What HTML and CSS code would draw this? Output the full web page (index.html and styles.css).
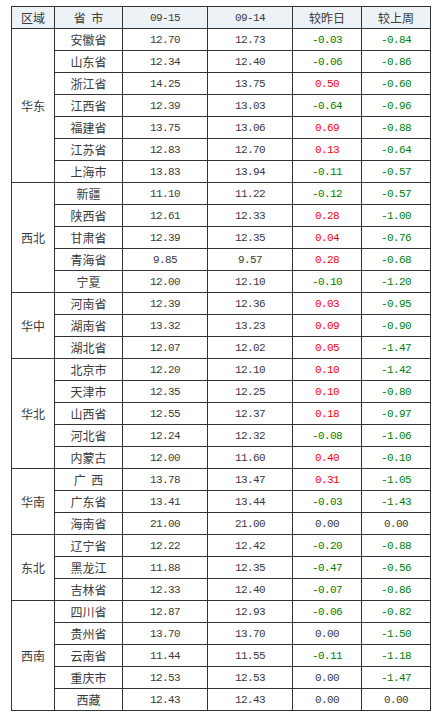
FILE: index.html
```html
<!DOCTYPE html>
<html lang="zh-CN">
<head>
<meta charset="utf-8">
<title>价格表</title>
<link rel="stylesheet" href="styles.css">
</head>
<body>
<div class="wrap">
<table class="price">
<colgroup>
<col class="c-region"><col class="c-prov"><col class="c-num"><col class="c-num"><col class="c-chg"><col class="c-chg">
</colgroup>
<thead>
<tr><th>区域</th><th>省&nbsp;&nbsp;市</th><th class="n">09-15</th><th class="n">09-14</th><th>较昨日</th><th>较上周</th></tr>
</thead>
<tbody>
<tr><td class="region" rowspan="7">华东</td><td>安徽省</td><td class="n">12.70</td><td class="n">12.73</td><td class="n dn">-0.03</td><td class="n dn">-0.84</td></tr>
<tr><td>山东省</td><td class="n">12.34</td><td class="n">12.40</td><td class="n dn">-0.06</td><td class="n dn">-0.86</td></tr>
<tr><td>浙江省</td><td class="n">14.25</td><td class="n">13.75</td><td class="n up">0.50</td><td class="n dn">-0.60</td></tr>
<tr><td>江西省</td><td class="n">12.39</td><td class="n">13.03</td><td class="n dn">-0.64</td><td class="n dn">-0.96</td></tr>
<tr><td>福建省</td><td class="n">13.75</td><td class="n">13.06</td><td class="n up">0.69</td><td class="n dn">-0.88</td></tr>
<tr><td>江苏省</td><td class="n">12.83</td><td class="n">12.70</td><td class="n up">0.13</td><td class="n dn">-0.64</td></tr>
<tr><td>上海市</td><td class="n">13.83</td><td class="n">13.94</td><td class="n dn">-0.11</td><td class="n dn">-0.57</td></tr>

<tr><td class="region" rowspan="5">西北</td><td>新疆</td><td class="n">11.10</td><td class="n">11.22</td><td class="n dn">-0.12</td><td class="n dn">-0.57</td></tr>
<tr><td>陕西省</td><td class="n">12.61</td><td class="n">12.33</td><td class="n up">0.28</td><td class="n dn">-1.00</td></tr>
<tr><td>甘肃省</td><td class="n">12.39</td><td class="n">12.35</td><td class="n up">0.04</td><td class="n dn">-0.76</td></tr>
<tr><td>青海省</td><td class="n">9.85</td><td class="n">9.57</td><td class="n up">0.28</td><td class="n dn">-0.68</td></tr>
<tr><td>宁夏</td><td class="n">12.00</td><td class="n">12.10</td><td class="n dn">-0.10</td><td class="n dn">-1.20</td></tr>

<tr><td class="region" rowspan="3">华中</td><td>河南省</td><td class="n">12.39</td><td class="n">12.36</td><td class="n up">0.03</td><td class="n dn">-0.95</td></tr>
<tr><td>湖南省</td><td class="n">13.32</td><td class="n">13.23</td><td class="n up">0.09</td><td class="n dn">-0.90</td></tr>
<tr><td>湖北省</td><td class="n">12.07</td><td class="n">12.02</td><td class="n up">0.05</td><td class="n dn">-1.47</td></tr>

<tr><td class="region" rowspan="5">华北</td><td>北京市</td><td class="n">12.20</td><td class="n">12.10</td><td class="n up">0.10</td><td class="n dn">-1.42</td></tr>
<tr><td>天津市</td><td class="n">12.35</td><td class="n">12.25</td><td class="n up">0.10</td><td class="n dn">-0.80</td></tr>
<tr><td>山西省</td><td class="n">12.55</td><td class="n">12.37</td><td class="n up">0.18</td><td class="n dn">-0.97</td></tr>
<tr><td>河北省</td><td class="n">12.24</td><td class="n">12.32</td><td class="n dn">-0.08</td><td class="n dn">-1.06</td></tr>
<tr><td>内蒙古</td><td class="n">12.00</td><td class="n">11.60</td><td class="n up">0.40</td><td class="n dn">-0.10</td></tr>

<tr><td class="region" rowspan="3">华南</td><td>广&nbsp;&nbsp;西</td><td class="n">13.78</td><td class="n">13.47</td><td class="n up">0.31</td><td class="n dn">-1.05</td></tr>
<tr><td>广东省</td><td class="n">13.41</td><td class="n">13.44</td><td class="n dn">-0.03</td><td class="n dn">-1.43</td></tr>
<tr><td>海南省</td><td class="n">21.00</td><td class="n">21.00</td><td class="n">0.00</td><td class="n">0.00</td></tr>

<tr><td class="region" rowspan="3">东北</td><td>辽宁省</td><td class="n">12.22</td><td class="n">12.42</td><td class="n dn">-0.20</td><td class="n dn">-0.88</td></tr>
<tr><td>黑龙江</td><td class="n">11.88</td><td class="n">12.35</td><td class="n dn">-0.47</td><td class="n dn">-0.56</td></tr>
<tr><td>吉林省</td><td class="n">12.33</td><td class="n">12.40</td><td class="n dn">-0.07</td><td class="n dn">-0.86</td></tr>

<tr><td class="region" rowspan="5">西南</td><td>四川省</td><td class="n">12.87</td><td class="n">12.93</td><td class="n dn">-0.06</td><td class="n dn">-0.82</td></tr>
<tr><td>贵州省</td><td class="n">13.70</td><td class="n">13.70</td><td class="n">0.00</td><td class="n dn">-1.50</td></tr>
<tr><td>云南省</td><td class="n">11.44</td><td class="n">11.55</td><td class="n dn">-0.11</td><td class="n dn">-1.18</td></tr>
<tr><td>重庆市</td><td class="n">12.53</td><td class="n">12.53</td><td class="n">0.00</td><td class="n dn">-1.47</td></tr>
<tr><td>西藏</td><td class="n">12.43</td><td class="n">12.43</td><td class="n">0.00</td><td class="n">0.00</td></tr>
</tbody>
</table>
</div>
</body>
</html>
```

FILE: styles.css
```css
html, body {
  margin: 0;
  padding: 0;
  background: #ffffff;
}
.wrap {
  padding: 6px 0 0 11px;
}
.price {
  border-collapse: collapse;
  table-layout: fixed;
  width: 420px;
  font-family: "Noto Sans CJK SC", "Noto Sans", sans-serif;
  font-size: 12px;
  color: #3a3a3a;
}
.c-region { width: 43px; }
.c-prov { width: 68px; }
.c-num { width: 85px; }
.c-chg { width: 69px; }
.price th,
.price td {
  border: 1px solid #333333;
  height: 21px;
  padding: 0;
  text-align: center;
  vertical-align: middle;
  font-weight: normal;
  line-height: 14px;
  white-space: nowrap;
}
.price th {
  background: #edf2f7;
}
.price .n {
  font-family: "Liberation Mono", "DejaVu Sans Mono", monospace;
  font-size: 11px;
  letter-spacing: -0.6px;
}
.price .up { color: #ff0000; }
.price .dn { color: #008000; }
```
